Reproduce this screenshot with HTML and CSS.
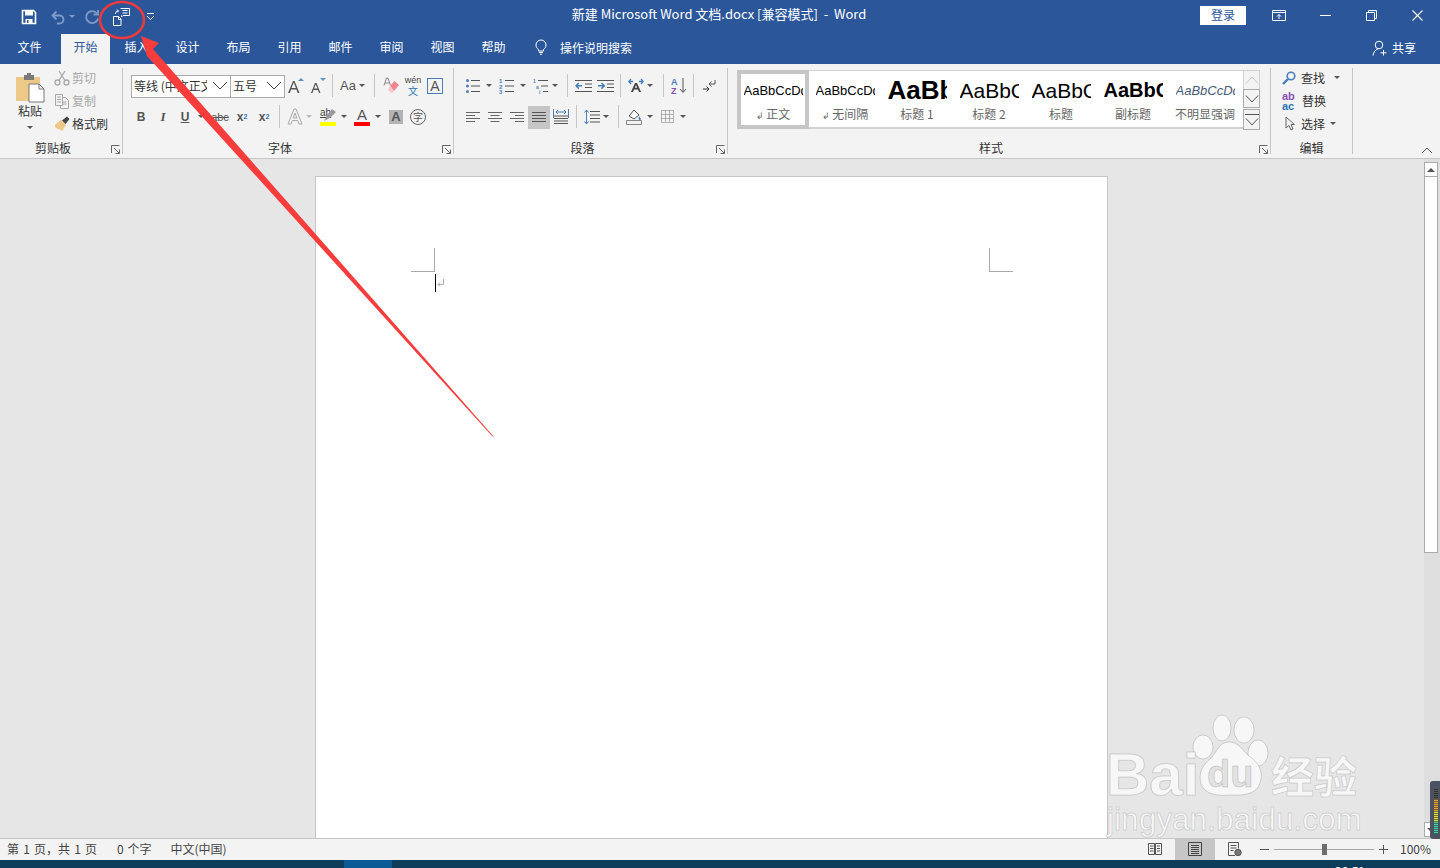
FILE: index.html
```html
<!DOCTYPE html>
<html lang="zh-CN">
<head>
    <meta charset="UTF-8">
    <title>新建 Microsoft Word 文档.docx [兼容模式] - Word</title>
    <link rel="stylesheet" href="styles.css">
</head>
<body>
<div class="app">
    <!-- title bar -->
    <header class="titlebar">
        <div class="qat">
            <span class="qat-btn save"><svg width="16" height="16" viewBox="0 0 16 16"><path d="M1.500 1.500h11l2 2v11h-13z" fill="none" stroke="#fff" stroke-width="1.600"/><path d="M4 1.500h8v5H4z" fill="#fff"/><path d="M4.500 10h7v4.500h-7z" fill="#fff"/><path d="M6 11h1.500v3H6z" fill="#2b579a"/></svg></span>
            <span class="qat-btn undo"><svg width="16" height="16" viewBox="0 0 16 16" fill="none" stroke="#7f9cc8" stroke-width="1.800"><path d="M3 6.500h6.500a4 4 0 0 1 0 8H7"/><path d="M6.500 2.500l-4 4 4 4"/></svg></span>
            <span class="qat-caret dim"></span>
            <span class="qat-btn redo"><svg width="16" height="16" viewBox="0 0 16 16" fill="none" stroke="#7f9cc8" stroke-width="1.800"><path d="M13 4.500a6 6 0 1 0 1 5"/><path d="M14 1v4.500H9.500"/></svg></span>
            <span class="qat-btn custom"><svg width="18" height="18" viewBox="0 0 18 18" fill="none" stroke="#fff"><path d="M.500 8.500h5l2.500 2.500v6.500H.500z"/><path d="M5.500 8.500v3h2.500"/><path d="M7.500 .500h9v7h-6.500l-1.500 1.500v-1.500"/><path d="M9.500 2.500h5M9.500 5h5"/><path d="M2.500 6c0-2 1-3 3-3M4 1.500L5.500 3 4 4.500"/></svg></span>
            <span class="qat-more"><svg width="9" height="9" viewBox="0 0 9 9" fill="none" stroke="#fff"><path d="M1 1.500h7M1 4l3.500 3.500L8 4"/></svg></span>
        </div>
        <div class="doc-title">新建 Microsoft Word 文档.docx [兼容模式]&nbsp; - &nbsp;Word</div>
        <div class="win-controls">
            <span class="login">登录</span>
            <span class="win-btn ribbon-opt"><svg width="14" height="11" viewBox="0 0 14 11" fill="none" stroke="#fff"><path d="M.500.500h13v10H.500zM.500 2.500h13M7 9V4.500M5 6.500l2-2 2 2"/></svg></span>
            <span class="win-btn"><svg width="11" height="1" viewBox="0 0 11 1"><path d="M0 0h11v1H0z" fill="#fff"/></svg></span>
            <span class="win-btn"><svg width="11" height="11" viewBox="0 0 11 11" fill="none" stroke="#fff"><path d="M.500 2.500h8v8h-8zM2.500 2.500v-2h8v8h-2"/></svg></span>
            <span class="win-btn"><svg width="11" height="11" viewBox="0 0 11 11" stroke="#fff" stroke-width="1.100"><path d="M.500.500l10 10M10.500.500l-10 10"/></svg></span>
        </div>
    </header>

    <!-- tabs -->
    <nav class="tabs">
        <span class="tab tab-file">文件</span>
        <span class="tab active">开始</span>
        <span class="tab">插入</span>
        <span class="tab">设计</span>
        <span class="tab">布局</span>
        <span class="tab">引用</span>
        <span class="tab">邮件</span>
        <span class="tab">审阅</span>
        <span class="tab">视图</span>
        <span class="tab">帮助</span>
        <span class="tell-me">
            <svg width="14" height="16" viewBox="0 0 14 16" fill="none" stroke="#fff"><path d="M4.500 10.500C3 9.500 2 8 2 6a5 5 0 0 1 10 0c0 2-1 3.500-2.500 4.500v1.500h-5zM5 13.500h4M6 15.300h2"/></svg>
            操作说明搜索
        </span>
        <span class="share">
            <svg width="16" height="16" viewBox="0 0 16 16" fill="none" stroke="#fff"><circle cx="7" cy="5" r="3.800"/><path d="M1 15.500c.5-3.500 2.500-6 5-6.500M11.500 10v5.500M8.500 12.800h6"/></svg>
            共享
        </span>
    </nav>

    <!-- ribbon -->
    <section class="ribbon">
        <div class="group g-clip">
            <div class="clip">
                <div class="paste">
                    <svg width="30" height="31" viewBox="0 0 30 31"><path d="M1 5h24v24H1z" fill="#edc987"/><path d="M9 3h3V1h4v2h3v5H9z" fill="#7a7a7a"/><path d="M14 12h10l5 5v13H14z" fill="#fff" stroke="#777"/><path d="M24 12v5h5" fill="none" stroke="#777"/></svg>
                    <span class="paste-label">粘贴</span>
                    <span class="caret"></span>
                </div>
                <div class="clip-list">
                    <div class="clip-item off"><svg width="16" height="16" viewBox="0 0 16 16" fill="none" stroke="#a8a8a8" stroke-width="1.300"><circle cx="3.500" cy="12.500" r="2.500"/><circle cx="12.500" cy="12.500" r="2.500"/><path d="M11 1L5 10.500M5 1l6 9.500"/></svg>剪切</div>
                    <div class="clip-item off"><svg width="16" height="16" viewBox="0 0 16 16" fill="none" stroke="#a8a8a8"><path d="M1.500 1.500h7v11h-7zM3 4h4M3 6.500h4M3 9h4"/><path d="M8.500 4.500h3l3 3v8h-8v-3"/><path d="M8.500 9h4M8.500 11h4"/></svg>复制</div>
                    <div class="clip-item"><svg width="16" height="16" viewBox="0 0 16 16"><path d="M1 8.500L7 4l5 5-4 6-3-2-1 1-1-2-1 .5-1-2z" fill="#edc987"/><path d="M8 4.500l5-4 2.500 2.500-4 5z" fill="#444"/></svg>格式刷</div>
                </div>
            </div>
            <div class="group-label"><span></span><span>剪贴板</span><span class="launcher"><svg width="9" height="9" viewBox="0 0 9 9" fill="none" stroke="#666"><path d="M.500 8V.500H8.500M3 3l5.500 5.500M8.500 4.500v4h-4"/></svg></span></div>
        </div>

        <div class="group g-font">
            <div class="rows">
                <div class="row">
                    <span class="combo combo-font"><span class="combo-text">等线 (中文正文)</span><svg width="16" height="9" viewBox="0 0 16 9" fill="none" stroke="#444"><path d="M1 1l7 7 7-7"/></svg></span>
                    <span class="combo combo-size"><span class="combo-text">五号</span><svg width="16" height="9" viewBox="0 0 16 9" fill="none" stroke="#444"><path d="M1 1l7 7 7-7"/></svg></span>
                    <span class="i"><svg width="18" height="18" viewBox="0 0 18 18"><path d="M1 16L6 4h1.500l5 12h-1.800l-1.300-3.500H4L2.800 16zM4.500 11h4.400L6.800 5.500z" fill="#555"/><path d="M11 4l3-3 3 3z" fill="#5b8fc7"/></svg></span>
                    <span class="i"><svg width="18" height="18" viewBox="0 0 18 18"><path d="M2 16L6 6h1.500l4 10H10l-1-3H4.500l-1 3zM5 11.500h3.500L6.800 7.500z" fill="#555"/><path d="M11 1h6l-3 3z" fill="#5b8fc7"/></svg></span>
                    <span class="s m3"></span>
                    <span class="i aa">Aa</span><span class="c tight"></span>
                    <span class="s m7"></span>
                    <span class="i m1"><svg width="16" height="17" viewBox="0 0 16 17"><path d="M1 8.500L3.500 1h1.500l2.500 7.500M2 6h4.500" fill="none" stroke="#888"/><path d="M7 9l4.500-5L16 8l-5 6z" fill="#f2838f"/><path d="M7 9l4 5-2 2.500-4-3.500z" fill="#f8c6cc"/></svg></span>
                    <span class="i wen"><span class="wen-top">wén</span><span class="wen-bot">文</span></span>
                    <span class="i"><span class="char-box">A</span></span>
                </div>
                <div class="row">
                    <span class="i fs m7 bold-i">B</span>
                    <span class="i fs ital-i">I</span>
                    <span class="i fs under-i">U</span>
                    <span class="c"></span>
                    <span class="i fs strike-i m3">abc</span>
                    <span class="i fs sub-i">x<sub>2</sub></span>
                    <span class="i fs sub-i">x<sup>2</sup></span>
                    <span class="s m4"></span>
                    <span class="i"><svg width="16" height="17" viewBox="0 0 16 17"><path d="M1 16L7 1h2l6 15h-3l-1.300-3.500H5.300L4 16zM6.200 10h3.600L8 5z" fill="#f3f3f3" stroke="#aaa"/></svg></span><span class="c tight off"></span>
                    <span class="i m3"><span class="under-bar"><span class="ab">ab</span><svg width="12" height="12" viewBox="0 0 12 12"><path d="M0 12L3 6l5-6 4 3-6 6z" fill="#9a9a9a"/></svg><i class="bar yellow"></i></span></span><span class="c"></span>
                    <span class="i m2"><span class="under-bar"><span class="color-a">A</span><i class="bar red"></i></span></span><span class="c"></span>
                    <span class="i m2"><span class="shade-a">A</span></span>
                    <span class="i"><span class="circle-zi">字</span></span>
                </div>
            </div>
            <div class="group-label"><span></span><span>字体</span><span class="launcher"><svg width="9" height="9" viewBox="0 0 9 9" fill="none" stroke="#666"><path d="M.500 8V.500H8.500M3 3l5.500 5.500M8.500 4.500v4h-4"/></svg></span></div>
        </div>

        <div class="group g-para">
            <div class="rows">
                <div class="row">
                    <span class="i m8"><svg width="16" height="16" viewBox="0 0 16 16"><g fill="#4a7ebb"><circle cx="2.500" cy="2.500" r="1.500"/><circle cx="2.500" cy="8" r="1.500"/><circle cx="2.500" cy="13.500" r="1.500"/></g><path d="M6 2.500h9M6 8h9M6 13.500h9" stroke="#555"/></svg></span><span class="c"></span>
                    <span class="i m2"><svg width="16" height="16" viewBox="0 0 16 16"><g fill="#4a7ebb" font-size="6" font-family="Liberation Sans" font-weight="700"><text x="0" y="5">1</text><text x="0" y="10.500">2</text><text x="0" y="16">3</text></g><path d="M6 2.500h9M6 8h9M6 13.500h9" stroke="#555"/></svg></span><span class="c"></span>
                    <span class="i m2"><svg width="16" height="16" viewBox="0 0 16 16"><g fill="#4a7ebb" font-size="5" font-family="Liberation Sans" font-weight="700"><text x="0" y="5">1</text><text x="3" y="10.500">a</text><text x="6" y="16">i</text></g><path d="M5 2.500h10M8 8h7M10 13.500h5" stroke="#555"/></svg></span><span class="c tight"></span>
                    <span class="s m7"></span>
                    <span class="i"><svg width="17" height="14" viewBox="0 0 17 14" fill="none"><path d="M0 1.500h17M10 5h7M10 8.500h7M0 12.500h17" stroke="#555"/><path d="M7 6.800H1M3.800 4L1 6.800l2.800 2.800" stroke="#4a7ebb" stroke-width="1.500"/></svg></span>
                    <span class="i"><svg width="17" height="14" viewBox="0 0 17 14" fill="none"><path d="M0 1.500h17M10 5h7M10 8.500h7M0 12.500h17" stroke="#555"/><path d="M1 6.800h6M4.500 4l2.800 2.800L4.500 9.600" stroke="#4a7ebb" stroke-width="1.500"/></svg></span>
                    <span class="s m4"></span>
                    <span class="i"><svg width="16" height="15" viewBox="0 0 16 15"><path d="M3 14L7 5h2l4 9h-2L10 11.500H6L5 14zM6.800 9.800h2.400L8 7z" fill="#444"/><path d="M1 3.500h4M3 1L.8 3.500 3 6M15 3.500h-4M13 1l2.200 2.500L13 6" fill="none" stroke="#4a7ebb" stroke-width="1.300"/></svg></span><span class="c tight"></span>
                    <span class="s m8"></span>
                    <span class="i"><svg width="16" height="17" viewBox="0 0 16 17"><text x="0" y="7.500" font-size="9" font-family="Liberation Sans" fill="#4a7ebb" font-weight="700">A</text><text x="0" y="16.500" font-size="9" font-family="Liberation Sans" fill="#8a4fb5" font-weight="700">Z</text><path d="M12 1v14M9 12l3 3.500 3-3.500" fill="none" stroke="#555"/></svg></span>
                    <span class="s m3"></span>
                    <span class="i"><svg width="14" height="14" viewBox="0 0 14 14" fill="none" stroke="#555"><path d="M13 1v4H7M9.500 2.500L7 5l2.500 2.500"/><path d="M1 10h6M4.500 7.500L7 10l-2.500 2.500" stroke="#333"/></svg></span>
                </div>
                <div class="row">
                    <span class="i m8"><svg width="14" height="10" viewBox="0 0 14 10"><path d="M0 .500h14M0 3.500h9M0 6.500h14M0 9.500h9" stroke="#666"/></svg></span>
                    <span class="i"><svg width="14" height="10" viewBox="0 0 14 10"><path d="M0 .500h14M2.500 3.500h9M0 6.500h14M2.500 9.500h9" stroke="#666"/></svg></span>
                    <span class="i"><svg width="14" height="10" viewBox="0 0 14 10"><path d="M0 .500h14M5 3.500h9M0 6.500h14M5 9.500h9" stroke="#666"/></svg></span>
                    <span class="i on"><svg width="14" height="10" viewBox="0 0 14 10"><path d="M0 .500h14M0 3.500h14M0 6.500h14M0 9.500h14" stroke="#555"/></svg></span>
                    <span class="i"><svg width="16" height="16" viewBox="0 0 16 16" fill="none"><path d="M.500 0v9M15.500 0v9M3 3h10M5 1L3 3l2 2M11 1l2 2-2 2" stroke="#4a7ebb"/><path d="M1 7h14M1 9.500h14M1 12h14M1 14.500h14" stroke="#555"/></svg></span>
                    <span class="s m4"></span>
                    <span class="i"><svg width="16" height="16" viewBox="0 0 16 16" fill="none"><path d="M6 2.500h10M6 6h10M6 9.500h10M6 13h10" stroke="#555"/><path d="M2.500 1v14M.500 3.500l2-2.500 2 2.500M.500 12.500l2 2.500 2-2.500" stroke="#4a7ebb"/></svg></span><span class="c tight"></span>
                    <span class="s m7"></span>
                    <span class="i"><svg width="16" height="17" viewBox="0 0 16 17" fill="none"><path d="M3 8l5-6 5 5-5 4z" fill="#fff" stroke="#555"/><path d="M13 8l2 3-1 1.500-1.500-1.500z" fill="#4a7ebb"/><path d="M.500 12.500h15v4H.500z" stroke="#888"/></svg></span><span class="c"></span>
                    <span class="i m1"><svg width="13" height="13" viewBox="0 0 13 13" fill="none" stroke="#777" stroke-dasharray="1 1"><path d="M.500.500h12v12H.500zM.500 4.500h12M.500 8.500h12M4.500.500v12M8.500.500v12"/></svg></span><span class="c"></span>
                </div>
            </div>
            <div class="group-label"><span></span><span>段落</span><span class="launcher"><svg width="9" height="9" viewBox="0 0 9 9" fill="none" stroke="#666"><path d="M.500 8V.500H8.500M3 3l5.500 5.500M8.500 4.500v4h-4"/></svg></span></div>
        </div>

        <div class="group g-styles">
            <div class="gallery">
                <div class="style-list">
                    <div class="style-item selected"><div class="prev p-normal">AaBbCcDd</div><div class="style-name"><b>↲</b> 正文</div></div>
                    <div class="style-item"><div class="prev p-normal">AaBbCcDd</div><div class="style-name"><b>↲</b> 无间隔</div></div>
                    <div class="style-item"><div class="prev p-h1">AaBb</div><div class="style-name">标题 1</div></div>
                    <div class="style-item"><div class="prev p-h2">AaBbC</div><div class="style-name">标题 2</div></div>
                    <div class="style-item"><div class="prev p-h2">AaBbC</div><div class="style-name">标题</div></div>
                    <div class="style-item"><div class="prev p-sub">AaBbC</div><div class="style-name">副标题</div></div>
                    <div class="style-item"><div class="prev p-em">AaBbCcDd</div><div class="style-name">不明显强调</div></div>
                </div>
                <div class="gallery-scroll">
                    <span class="gs up"><svg width="14" height="8" viewBox="0 0 14 8" fill="none" stroke="#c6c6c6"><path d="M1 7.500l6-6.500 6 6.500"/></svg></span>
                    <span class="gs"><svg width="14" height="8" viewBox="0 0 14 8" fill="none" stroke="#555"><path d="M1 .500l6 6.500 6-6.500"/></svg></span>
                    <span class="gs more"><svg width="14" height="12" viewBox="0 0 14 12" fill="none" stroke="#555"><path d="M0 .500h14M1 4.500l6 6.500 6-6.500"/></svg></span>
                </div>
            </div>
            <div class="group-label"><span></span><span>样式</span><span class="launcher"><svg width="9" height="9" viewBox="0 0 9 9" fill="none" stroke="#666"><path d="M.500 8V.500H8.500M3 3l5.500 5.500M8.500 4.500v4h-4"/></svg></span></div>
        </div>

        <div class="group g-edit">
            <div class="edit-list">
                <div class="edit-item"><svg width="14" height="14" viewBox="0 0 14 14" fill="none"><circle cx="9" cy="5" r="3.800" stroke="#4a7ebb" stroke-width="1.600"/><path d="M6 8l-5 5" stroke="#4a7ebb" stroke-width="2.400"/></svg>查找<span class="c find-c"></span></div>
                <div class="edit-item"><span class="abac"><span class="abac-top">ab</span><span class="abac-bot">ac</span></span>替换</div>
                <div class="edit-item"><svg width="14" height="15" viewBox="0 0 14 15" fill="none" stroke="#666"><path d="M4 1v11l3-2.500 2 4.500 2-1-2-4.500h3.500z"/></svg>选择<span class="c"></span></div>
            </div>
            <div class="group-label"><span></span><span>编辑</span><span></span></div>
        </div>

        <div class="ribbon-end"><svg width="12" height="7" viewBox="0 0 12 7" fill="none" stroke="#555"><path d="M1 6l5-5 5 5"/></svg></div>
    </section>

    <!-- document area -->
    <main class="workspace">
        <div class="canvas">
            <div class="page">
                <div class="crop-row">
                    <span class="crop crop-left"></span>
                    <span class="crop crop-right"></span>
                </div>
                <div class="cursor-line">
                    <span class="cursor"></span>
                    <svg width="7" height="9" viewBox="0 0 7 9" fill="none" stroke="#aaa"><path d="M6.500 0v5.500H1M3 3.500L1 5.500l2 2"/></svg>
                </div>
            </div>
        </div>
        <div class="scrollbar">
            <span class="sb-btn"><i class="tri-up"></i></span>
            <span class="sb-thumb"></span>
            <span class="sb-btn sb-down"><i class="tri-down"></i></span>
        </div>
    </main>

    <!-- status bar -->
    <footer class="statusbar">
        <span class="st st-page">第 1 页，共 1 页</span>
        <span class="st st-words">0 个字</span>
        <span class="st st-lang">中文(中国)</span>
        <div class="st-right">
            <span class="view"><svg width="14" height="14" viewBox="0 0 14 14" fill="none" stroke="#555"><path d="M.500 1.500h6v11h-6zM7.500 1.500h6v11h-6zM2 4h3.500M2 6.500h3.500M2 9h3.500M9 4h3M9 6.500h3M9 9h3"/></svg></span>
            <span class="view on"><svg width="14" height="14" viewBox="0 0 14 14" fill="none" stroke="#444"><path d="M.500.500h13v13H.500zM3 3.500h8M3 5.500h8M3 7.500h8M3 9.500h8M3 11.500h8"/></svg></span>
            <span class="view"><svg width="14" height="14" viewBox="0 0 14 14" fill="none" stroke="#555"><path d="M7 13.500H.500V.500h10v6M2.500 3.500h6M2.500 6h6M2.500 8.500h3"/><circle cx="10" cy="10.500" r="3.200" fill="#777"/></svg></span>
            <span class="zoom-btn zoom-minus"></span>
            <span class="slider"><i class="slider-thumb"></i></span>
            <span class="zoom-btn zoom-plus"></span>
            <span class="pct">100%</span>
        </div>
    </footer>
    <div class="taskbar"><span class="task-active"></span><span class="clock">20:51</span></div>

    <!-- things lying on top of the screenshot -->
    <svg class="overlay" width="1440" height="868" viewBox="0 0 1440 868">
        <g class="mark">
            <g fill="#f7f7f7" stroke="#000" stroke-opacity=".15">
                <ellipse cx="1222" cy="728" rx="9" ry="13"/>
                <ellipse cx="1244" cy="730" rx="10" ry="13"/>
                <ellipse cx="1203" cy="747" rx="10" ry="12"/>
                <ellipse cx="1258" cy="753" rx="10" ry="13"/>
                <path d="M1229 742c10 0 13 8 20 14 9 6 15 15 11 27-3 10-14 13-28 12-14 1-27 0-31-11-3-12 2-19 10-26 6-6 8-16 18-16z"/>
            </g>
            <text class="mark-bai" x="1106" y="795">Bai</text>
            <text class="mark-du" x="1207" y="787">du</text>
            <text class="mark-cn" x="1271" y="793">经验</text>
            <text class="mark-url" x="1107" y="830">jingyan.baidu.com</text>
        </g>
        <ellipse cx="122" cy="20" rx="22" ry="18" fill="none" stroke="#ee3a3a" stroke-width="2.500"/>
        <path d="M141 36L159 43 153 49 494 437 492 436 147 56z" fill="#f73c3c"/>
    </svg>
    <div class="meter"><i></i></div>
</div>
</body>
</html>
```

FILE: styles.css
```css
* {
    box-sizing: border-box;
}
html, body {
    margin: 0;
    padding: 0;
    height: 100%;
    overflow: hidden;
}
body {
    font-family: "Noto Sans CJK SC", "Liberation Sans", sans-serif;
    font-size: 12px;
    color: #444;
}
.app {
    position: relative;
    width: 1440px;
    height: 868px;
    display: flex;
    flex-direction: column;
    overflow: hidden;
    background-color: #e6e6e6;
}

/* title bar */
.titlebar {
    height: 36px;
    background-color: #2b579a;
    color: #fff;
    display: grid;
    grid-template-columns: 1fr auto 1fr;
    align-items: start;
}
.qat {
    display: flex;
    align-items: center;
    height: 33px;
    padding-left: 21px;
}
.qat-btn {
    display: flex;
    justify-content: center;
}
.save {
    width: 16px;
}
.undo {
    width: 16px;
    margin-left: 13px;
}
.qat-caret {
    width: 0;
    height: 0;
    margin-left: 3px;
    border: 3px solid transparent;
    border-top-color: #7f9cc8;
    border-bottom-width: 0;
}
.redo {
    width: 16px;
    margin-left: 9px;
}
.custom {
    width: 18px;
    margin-left: 13px;
}
.qat-more {
    display: flex;
    margin-left: 15px;
}
.doc-title {
    font-size: 13px;
    line-height: 28px;
    white-space: nowrap;
    padding-right: 2px;
}
.win-controls {
    display: flex;
    align-items: center;
    justify-content: flex-end;
    height: 31px;
}
.login {
    width: 46px;
    height: 19px;
    line-height: 17px;
    text-align: center;
    background-color: #fff;
    color: #2b579a;
    font-size: 12px;
    margin-right: 10px;
}
.win-btn {
    width: 46px;
    display: flex;
    justify-content: center;
}
.ribbon-opt {
    padding-right: 1px;
}

/* tabs */
.tabs {
    height: 28px;
    background-color: #2b579a;
    color: #fff;
    display: flex;
    padding-left: 5px;
}
.tab {
    width: 49px;
    margin-right: 2px;
    text-align: center;
    line-height: 22px;
    font-size: 12px;
}
.tab-file {
    margin-right: 7px;
}
.tab.active {
    background-color: #f3f3f3;
    color: #2b579a;
    margin-top: -2px;
    height: 30px;
    line-height: 26px;
}
.tell-me {
    display: flex;
    align-items: center;
    gap: 12px;
    height: 22px;
    margin-left: 14px;
}
.share {
    display: flex;
    align-items: center;
    gap: 4px;
    height: 23px;
    margin-left: auto;
    padding-right: 24px;
}

/* ribbon */
.ribbon {
    height: 95px;
    display: flex;
    padding: 4px 0 4px;
    background-color: #f3f3f3;
    border-bottom: 1px solid #c6c6c6;
}
.group {
    display: flex;
    flex-direction: column;
    height: 86px;
    border-right: 1px solid #c6c6c6;
    position: relative;
}
.g-clip {
    width: 123px;
}
.g-font {
    width: 331px;
}
.g-para {
    width: 274px;
}
.g-styles {
    width: 543px;
}
.g-edit {
    width: 82px;
}
.group-label {
    margin-top: auto;
    margin-bottom: -2px;
    padding-right: 16px;
    height: 16px;
    line-height: 16px;
    display: grid;
    grid-template-columns: 1fr auto 1fr;
    font-size: 12px;
    color: #333;
}
.launcher {
    justify-self: end;
    display: flex;
    align-items: flex-end;
    margin-right: -14px;
    padding-bottom: 2px;
}
.g-edit .group-label {
    padding-right: 0;
}
.rows {
    margin-top: 6px;
    display: flex;
    flex-direction: column;
    gap: 8px;
}
.row {
    display: flex;
    height: 23px;
    align-items: center;
}
.i {
    width: 22px;
    height: 23px;
    display: flex;
    align-items: center;
    justify-content: center;
    flex: none;
    color: #555;
}
.i.on {
    background-color: #c6c6c6;
    margin-top: 2px;
    padding-bottom: 2px;
}
.c {
    flex: none;
    width: 10px;
    height: 3px;
    position: relative;
    display: inline-block;
}
.c::after {
    content: "";
    position: absolute;
    left: 2px;
    top: 0;
    border: 3px solid transparent;
    border-top-color: #555;
    border-bottom-width: 0;
}
.c.off::after {
    border-top-color: #b8b8b8;
}
.tight {
    margin-left: -2px;
}
.s {
    flex: none;
    width: 1px;
    height: 23px;
    background-color: #c6c6c6;
    margin-right: 4px;
}
.m1 { margin-left: 1px; }
.m2 { margin-left: 2px; }
.m3 { margin-left: 3px; }
.m4 { margin-left: 4px; }
.m7 { margin-left: 7px; }
.m8 { margin-left: 8px; }

/* clipboard */
.clip {
    display: flex;
    margin-top: -2px;
}
.paste {
    width: 46px;
    margin-left: 7px;
    padding-top: 6px;
    display: flex;
    flex-direction: column;
    align-items: center;
}
.paste-label {
    color: #333;
    line-height: 16px;
}
.caret {
    margin-top: 7px;
    border: 3px solid transparent;
    border-top-color: #555;
    border-bottom-width: 0;
}
.clip-list {
    margin-left: 1px;
}
.clip-item {
    display: flex;
    align-items: center;
    gap: 2px;
    height: 23px;
    color: #333;
    white-space: nowrap;
}
.clip-item.off {
    color: #a8a8a8;
}

/* font group */
.combo {
    display: flex;
    align-items: center;
    height: 23px;
    margin-top: 2px;
    padding-bottom: 2px;
    background-color: #fff;
    border: 1px solid #ababab;
    color: #333;
    font-size: 12px;
    flex: none;
    overflow: hidden;
}
.combo-text {
    flex: 1;
    overflow: hidden;
    white-space: nowrap;
    padding-left: 2px;
}
.combo svg {
    flex: none;
    margin: 0 2px 0 5px;
}
.combo-font {
    width: 100px;
    margin-left: 8px;
}
.combo-size {
    width: 55px;
    margin-left: -1px;
}
.aa {
    font-family: "Liberation Sans", sans-serif;
    font-size: 13px;
}
.wen {
    flex-direction: column;
}
.wen-top {
    font-family: "Liberation Sans", sans-serif;
    font-size: 9px;
    line-height: 10px;
    color: #444;
}
.wen-bot {
    font-size: 10px;
    line-height: 12px;
    color: #2f75b5;
}
.char-box {
    width: 16px;
    height: 16px;
    line-height: 14px;
    text-align: center;
    border: 1px solid #4a7ebb;
    font-family: "Liberation Sans", sans-serif;
    font-size: 14px;
}
.fs {
    font-family: "Liberation Sans", sans-serif;
    font-size: 12px;
}
.bold-i {
    font-weight: 700;
}
.ital-i {
    font-style: italic;
    font-family: "Liberation Serif", serif;
    font-size: 13px;
    font-weight: 700;
}
.under-i {
    font-weight: 700;
    text-decoration: underline;
}
.strike-i {
    text-decoration: line-through;
    font-size: 11px;
}
.sub-i {
    font-weight: 700;
}
.sub-i sub, .sub-i sup {
    font-size: 7px;
    color: #2f75b5;
}
.under-bar {
    position: relative;
    display: flex;
    width: 16px;
    height: 18px;
    justify-content: center;
}
.ab {
    font-family: "Liberation Sans", sans-serif;
    font-size: 10px;
    line-height: 10px;
    position: absolute;
    left: 0;
    top: 0;
    text-decoration: underline;
    color: #444;
}
.under-bar svg {
    position: absolute;
    right: 0;
    top: 1px;
}
.bar {
    position: absolute;
    left: 0;
    bottom: 0;
    width: 16px;
    height: 4px;
}
.yellow {
    background-color: #ffff00;
}
.red {
    background-color: #ff0000;
}
.color-a {
    font-family: "Liberation Sans", sans-serif;
    font-size: 15px;
    line-height: 14px;
    color: #555;
}
.shade-a {
    width: 14px;
    height: 14px;
    background-color: #b4b4b4;
    text-align: center;
    line-height: 14px;
    font-family: "Liberation Sans", sans-serif;
    font-weight: 700;
    font-size: 13px;
    color: #555;
}
.circle-zi {
    width: 16px;
    height: 16px;
    line-height: 14px;
    border: 1px solid #666;
    border-radius: 50%;
    text-align: center;
    font-size: 10px;
}

/* styles gallery */
.gallery {
    display: flex;
    width: 523px;
    height: 60px;
    margin: 2px 0 0 9px;
}
.style-list {
    display: flex;
    width: 507px;
    height: 59px;
    background-color: #fff;
    border: 1px solid #d2d2d2;
    border-width: 1px 0 2px 0;
}
.style-item {
    width: 72px;
    flex: none;
    display: flex;
    flex-direction: column;
    align-items: center;
    padding-top: 4px;
}
.style-item.selected {
    border: 4px solid #c6c6c6;
    margin-top: -1px;
    height: 59px;
    padding-top: 1px;
}
.prev {
    width: 59px;
    height: 31px;
    line-height: 31px;
    overflow: hidden;
    white-space: nowrap;
    color: #000;
    font-family: "Liberation Sans", sans-serif;
    flex: none;
}
.p-normal {
    font-size: 13px;
}
.p-h1 {
    font-size: 26px;
    font-weight: 700;
}
.p-h2 {
    font-size: 21px;
}
.p-sub {
    font-size: 20px;
    font-weight: 700;
}
.p-em {
    font-size: 13px;
    font-style: italic;
    color: #4a5a78;
}
.style-name {
    font-size: 12px;
    line-height: 16px;
    color: #666;
    white-space: nowrap;
}
.style-name b {
    font-weight: 400;
    font-size: 9px;
}
.gallery-scroll {
    width: 17px;
    display: flex;
    flex-direction: column;
}
.gs {
    height: 19px;
    display: flex;
    align-items: center;
    justify-content: center;
    border: 1px solid #ababab;
    margin-top: -1px;
    background-color: #f3f3f3;
}
.gs:first-child {
    margin-top: 0;
    height: 20px;
    border-color: #d2d2d2;
}
.gs.more {
    height: 21px;
    margin-top: 1px;
}

/* editing */
.edit-list {
    margin-top: -2px;
    padding-left: 11px;
}
.edit-item {
    display: flex;
    align-items: center;
    gap: 3px;
    height: 23px;
    color: #333;
    white-space: nowrap;
}
.edit-item svg {
    margin-right: 2px;
}
.find-c {
    margin-left: 4px;
}
.abac {
    width: 17px;
    font-family: "Liberation Sans", sans-serif;
    font-weight: 700;
    font-size: 11px;
    line-height: 10px;
    display: flex;
    flex-direction: column;
}
.abac-top {
    color: #8a4fb5;
}
.abac-bot {
    color: #2f75b5;
}
.ribbon-end {
    flex: 1;
    display: flex;
    justify-content: flex-end;
    align-items: flex-end;
    height: 86px;
    padding-right: 7px;
}

/* document */
.workspace {
    flex: 1;
    display: flex;
    min-height: 0;
}
.canvas {
    flex: 1;
    padding: 17px 0 0 315px;
    overflow: hidden;
}
.page {
    width: 793px;
    height: 100%;
    background-color: #fff;
    border: 1px solid #c6c6c6;
    border-bottom: 0;
    padding: 71px 94px 0 95px;
}
.crop-row {
    display: flex;
    justify-content: space-between;
}
.crop {
    width: 24px;
    height: 24px;
    border-bottom: 1px solid #a8a8a8;
}
.crop-left {
    border-right: 1px solid #a8a8a8;
}
.crop-right {
    border-left: 1px solid #a8a8a8;
}
.cursor-line {
    display: flex;
    align-items: center;
    gap: 1px;
    margin: 2px 0 0 24px;
}
.cursor {
    width: 1px;
    height: 18px;
    background-color: #000;
}
.scrollbar {
    width: 16px;
    background-color: #dedede;
    padding: 3px 2px 1px 0;
    display: flex;
    flex-direction: column;
}
.sb-btn {
    height: 15px;
    background-color: #fff;
    border: 1px solid #ababab;
    display: flex;
    align-items: center;
    justify-content: center;
}
.sb-thumb {
    height: 376px;
    background-color: #fff;
    border: 1px solid #ababab;
    border-top: 0;
}
.sb-down {
    margin-top: auto;
}
.tri-up, .tri-down {
    border: 4px solid transparent;
}
.tri-up {
    border-bottom-color: #555;
    border-top-width: 0;
}
.tri-down {
    border-top-color: #555;
    border-bottom-width: 0;
}

/* status bar */
.statusbar {
    height: 22px;
    background-color: #f3f3f3;
    border-top: 1px solid #c6c6c6;
    display: flex;
    align-items: center;
    color: #444;
    font-size: 12px;
}
.st {
    white-space: nowrap;
    padding-bottom: 3px;
}
.st-page {
    margin-left: 7px;
    word-spacing: 1.5px;
}
.st-words {
    margin-left: 20px;
    word-spacing: 1px;
}
.st-lang {
    margin-left: 19px;
}
.st-right {
    margin-left: auto;
    display: flex;
    align-items: center;
    height: 21px;
}
.view {
    width: 40px;
    height: 21px;
    padding-bottom: 2px;
    display: flex;
    align-items: center;
    justify-content: center;
}
.view.on {
    background-color: #c6c6c6;
}
.zoom-btn {
    width: 19px;
    height: 21px;
    position: relative;
    flex: none;
}
.zoom-btn::before {
    content: "";
    position: absolute;
    left: 5px;
    top: 10px;
    width: 9px;
    height: 1px;
    background-color: #555;
}
.zoom-plus::after {
    content: "";
    position: absolute;
    left: 9px;
    top: 6px;
    width: 1px;
    height: 9px;
    background-color: #555;
}
.slider {
    width: 100px;
    height: 1px;
    background-color: #a8a8a8;
    position: relative;
}
.slider-thumb {
    position: absolute;
    left: 48px;
    top: -5px;
    width: 5px;
    height: 11px;
    background-color: #6e6e6e;
}
.pct {
    width: 40px;
    margin-left: 7px;
    padding-bottom: 3px;
    white-space: nowrap;
}

/* taskbar, only its top shows */
.taskbar {
    height: 8px;
    background-color: #0e3d5c;
    display: flex;
    overflow: hidden;
}
.task-active {
    width: 48px;
    margin-left: 344px;
    background-color: #0a5a96;
}
.clock {
    margin-left: 943px;
    color: #fff;
    font-size: 12px;
    line-height: 16px;
    margin-top: 3px;
}

/* annotation and watermark */
.overlay {
    position: absolute;
    left: 0;
    top: 0;
}
.mark text {
    fill: #f7f7f7;
    stroke: #000;
    stroke-opacity: .15;
    font-family: "Liberation Sans", sans-serif;
}
.mark-bai {
    font-size: 60px;
    font-weight: 700;
}
.mark-du {
    font-size: 38px;
    font-weight: 700;
}
.mark .mark-du {
    fill: #e2e2e2;
}
.mark .mark-cn {
    font-family: "Noto Sans CJK SC", sans-serif;
    font-size: 43px;
    font-weight: 700;
}
.mark-url {
    font-size: 31px;
    letter-spacing: .3px;
}
.meter {
    position: absolute;
    right: 0;
    top: 781px;
    width: 10px;
    height: 58px;
    background-color: #4b5363;
    border-radius: 3px 0 0 3px;
    padding: 7px 2px 5px 4px;
}
.meter i {
    display: block;
    height: 100%;
    background: repeating-linear-gradient(to bottom, transparent 0 1px, rgba(0,0,0,.45) 1px 2px), linear-gradient(to bottom, #555 0 25%, #e8a33a 25% 50%, #d6d84a 50% 75%, #4fd0a8 75%);
}
```
